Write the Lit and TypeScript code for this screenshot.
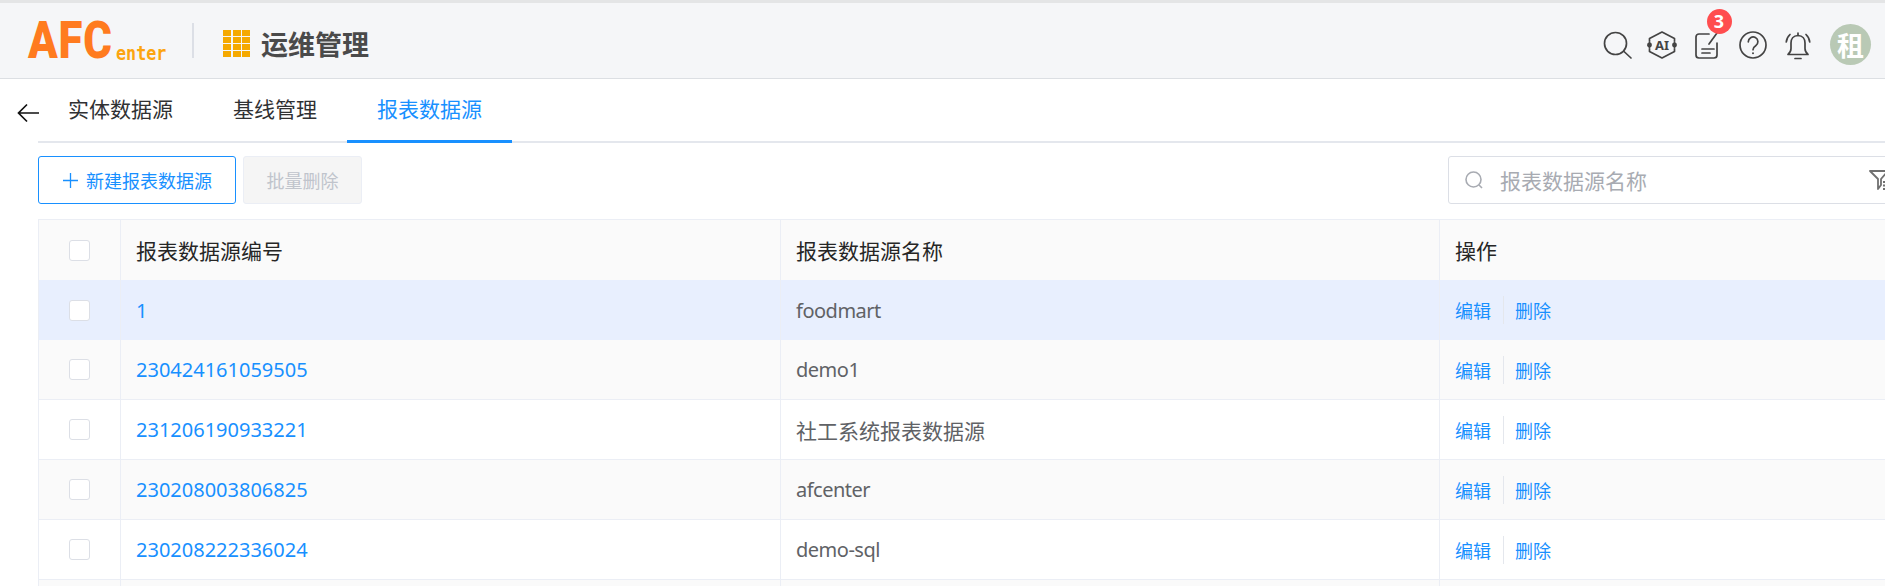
import { LitElement, html, css, svg } from "lit";
import { customElement } from "lit/decorators.js";

const rows = [
  { id: "1", name: "foodmart", cjk: false },
  { id: "230424161059505", name: "demo1", cjk: false },
  { id: "231206190933221", name: "社工系统报表数据源", cjk: true },
  { id: "230208003806825", name: "afcenter", cjk: false },
  { id: "230208222336024", name: "demo-sql", cjk: false },
  { id: "", name: "", cjk: false },
];

@customElement("app-root")
export class AppRoot extends LitElement {
  static styles = css`
    :host {
      display: block;
      width: 1885px;
      height: 586px;
      overflow: hidden;
      background: #fff;
      font-family: "Noto Sans", "Noto Sans CJK SC", sans-serif;
    }
    .top {
      height: 75px;
      border-top: 3px solid #e4e5e6;
      border-bottom: 1px solid #dcdfe3;
      background: #f5f6f8;
      display: flex;
      align-items: center;
    }
    .logo {
      width: 192px;
      height: 75px;
      flex: none;
      position: relative;
      overflow: hidden;
    }
    .afc {
      position: absolute;
      left: 28px;
      top: 2px;
      font: 900 52px/72px Roboto, sans-serif;
      color: #ff7b1f;
      transform: scaleX(0.84);
      transform-origin: left center;
      letter-spacing: 1px;
    }
    .enter {
      position: absolute;
      left: 116px;
      top: 38px;
      font: 700 19px/24px "DejaVu Sans Mono", monospace;
      color: #fca510;
      transform: scaleX(0.88);
      transform-origin: left center;
    }
    .divider {
      width: 2px;
      height: 35px;
      background: #dcdfe6;
      flex: none;
    }
    .app {
      display: flex;
      align-items: center;
      gap: 11px;
      margin-left: 29px;
      padding-top: 6px;
    }
    .grid {
      display: grid;
      grid-template-columns: repeat(3, 8px);
      grid-auto-rows: 5.5px;
      gap: 1.5px;
    }
    .grid i {
      background: #f5a900;
    }
    .title {
      font: 700 27px/36px "Noto Sans CJK SC", sans-serif;
      color: #4a4a4a;
    }
    .icons {
      margin-left: auto;
      display: flex;
      align-items: center;
      gap: 15.5px;
      padding: 9px 14px 0 0;
    }
    .ico {
      width: 30px;
      height: 30px;
      position: relative;
      flex: none;
    }
    .ico svg {
      display: block;
      overflow: visible;
    }
    .badge {
      position: absolute;
      left: 14.5px;
      top: -21.5px;
      width: 25px;
      height: 25px;
      border-radius: 50%;
      background: #ff4d4f;
      color: #fff;
      font: 700 18px/25px "Noto Sans", sans-serif;
      text-align: center;
    }
    .avatar {
      width: 41px;
      height: 41px;
      border-radius: 50%;
      background: #b9c9b5;
      color: #fff;
      font: 700 27px/41px "Noto Sans CJK SC", sans-serif;
      text-align: center;
      margin: -2px 0 0 1.5px;
      flex: none;
    }
    .nav {
      display: flex;
      height: 64px;
    }
    .back {
      width: 38px;
      flex: none;
      position: relative;
    }
    .back svg {
      position: absolute;
      left: 17px;
      top: 24px;
    }
    .tabs {
      flex: 1;
      display: flex;
      border-bottom: 2px solid #e4e7ed;
      height: 62px;
    }
    .tab {
      padding: 0 30px;
      font-size: 21px;
      line-height: 61px;
      color: #303133;
      height: 62px;
      box-sizing: border-box;
    }
    .tab.on {
      color: #1890ff;
      border-bottom: 3px solid #1890ff;
      height: 64px;
      margin-bottom: -2px;
    }
    .main {
      padding: 13px 0 0 38px;
      width: 1900px;
      box-sizing: border-box;
    }
    .bar {
      display: flex;
      align-items: center;
      gap: 7px;
      height: 48px;
    }
    .btn {
      height: 48px;
      box-sizing: border-box;
      border-radius: 3px;
      font-size: 18px;
      display: flex;
      align-items: center;
    }
    .btn.add {
      width: 198px;
      padding-left: 24px;
      gap: 8px;
      border: 1px solid #1890ff;
      color: #1890ff;
      background: #fff;
    }
    .btn.off {
      width: 119px;
      justify-content: center;
      border: 1px solid #ebeef5;
      background: #f5f5f5;
      color: #c0c4cc;
    }
    .search {
      margin-left: auto;
      width: 452px;
      height: 48px;
      box-sizing: border-box;
      border: 1px solid #dcdfe6;
      border-radius: 3px;
      display: flex;
      align-items: center;
      padding-left: 16px;
      gap: 17px;
      font-size: 21px;
      color: #a8abb2;
      position: relative;
    }
    .filter {
      position: absolute;
      left: 420px;
      top: 12px;
    }
    .table {
      margin-top: 15px;
      border-top: 1px solid #ebeef5;
      border-left: 1px solid #ebeef5;
    }
    .row {
      display: grid;
      grid-template-columns: 82px 660px 659px 1fr;
      height: 60px;
      box-sizing: border-box;
      border-bottom: 1px solid #ebeef5;
      background: #fff;
    }
    .row.head {
      background: #fafafa;
      height: 60px;
      border-bottom: 0;
      font-size: 21px;
      color: #262626;
    }
    .row.alt {
      background: #fafafa;
    }
    .row.sel {
      background: #e8effe;
      border-bottom: 0;
    }
    .cell {
      border-right: 1px solid #ebeef5;
      padding-left: 15px;
      display: flex;
      align-items: center;
      min-width: 0;
    }
    .cell.chk {
      padding: 0;
      justify-content: center;
    }
    .box {
      width: 21px;
      height: 21px;
      box-sizing: border-box;
      background: #fff;
      border: 1px solid #dcdfe6;
      border-radius: 3px;
    }
    .link {
      font-size: 20px;
      color: #1890ff;
    }
    .name {
      font-size: 20px;
      letter-spacing: -0.5px;
      color: #606266;
    }
    .name.cjk {
      font-size: 21px;
      letter-spacing: 0;
    }
    .ops {
      display: flex;
      align-items: center;
      font-size: 18px;
      color: #1890ff;
      padding-left: 15px;
    }
    .sep {
      width: 1px;
      height: 28px;
      background: #e4e7ed;
      margin: 0 11px 0 12px;
    }
  `;

  private icon(content: unknown) {
    return html`<svg width="30" height="30" viewBox="0 0 30 30" fill="none" stroke="#444" stroke-width="1.7" stroke-linecap="round" stroke-linejoin="round">${content}</svg>`;
  }

  render() {
    return html`
      <header class="top">
        <div class="logo">
          <span class="afc">AFC</span>
          <span class="enter">enter</span>
        </div>
        <div class="divider"></div>
        <div class="app">
          <div class="grid">${Array.from({ length: 12 }, () => html`<i></i>`)}</div>
          <div class="title">运维管理</div>
        </div>
        <div class="icons">
          <div class="ico">
            ${this.icon(svg`<circle cx="14.5" cy="13.5" r="11"/><path d="M23 21.500 30 28"/>`)}
          </div>
          <div class="ico">
            ${this.icon(svg`<path d="M2.500 11V8.500L15 2l12.500 6.500V11M27.500 19v2.500L15 28 2.500 21.500V19"/>
              <circle cx="2.500" cy="15" r="1.600" fill="#444"/><circle cx="27.500" cy="15" r="1.600" fill="#444"/>
              <path d="M2.500 12v6M27.500 12v6"/>
              <text x="15" y="19.500" text-anchor="middle" fill="#444" stroke="none" font-family="Noto Sans, sans-serif" font-weight="700" font-size="13">AI</text>`)}
          </div>
          <div class="ico">
            ${this.icon(svg`<path d="M17 4H7a3 3 0 0 0-3 3v18a3 3 0 0 0 3 3h15a3 3 0 0 0 3-3V13"/>
              <path d="M17 14 25 3"/><path d="M10 23h8M10 19h12" /> `)}
            <div class="badge">3</div>
          </div>
          <div class="ico">
            ${this.icon(svg`<circle cx="15" cy="15" r="13"/>
              <path d="M10.300 11.800a4.800 4.800 0 1 1 7.400 4c-1.700 1.100-2.700 1.900-2.700 3.900"/>
              <circle cx="15" cy="23.200" r="1" fill="#444" stroke="none"/>`)}
          </div>
          <div class="ico">
            ${this.icon(svg`<path d="M15 5.500c-4.800 0-7 3.600-7 7.500v5.500c0 3-1.800 5-3 6h20c-1.200-1-3-3-3-6V13c0-3.900-2.200-7.500-7-7.500Z"/>
              <path d="M15 5.500V3"/><path d="M12 28.500h6"/>
              <path d="M7 4.500C4.800 6.600 3.500 9 3.300 12M23 4.500c2.200 2.100 3.500 4.500 3.700 7.500"/>`)}
          </div>
          <div class="avatar">租</div>
        </div>
      </header>
      <nav class="nav">
        <div class="back">
          <svg width="22" height="20" viewBox="0 0 22 20" fill="none" stroke="#111" stroke-width="1.7">
            <path d="M22 10H1.500M10 1.500 1.500 10l8.500 8.500"/>
          </svg>
        </div>
        <div class="tabs">
          <div class="tab">实体数据源</div>
          <div class="tab">基线管理</div>
          <div class="tab on">报表数据源</div>
        </div>
      </nav>
      <main class="main">
        <div class="bar">
          <div class="btn add">
            <svg width="15" height="15" viewBox="0 0 15 15" stroke="#1890ff" stroke-width="1.3"><path d="M0 7.500h15M7.500 0v15"/></svg>
            <span>新建报表数据源</span>
          </div>
          <div class="btn off">批量删除</div>
          <div class="search">
            <svg width="18" height="18" viewBox="0 0 18 18" fill="none" stroke="#a8abb2" stroke-width="1.6">
              <circle cx="8.500" cy="8.500" r="7.500"/><path d="M14 14l3 3"/>
            </svg>
            <span>报表数据源名称</span>
            <svg class="filter" width="24" height="24" viewBox="0 0 24 24" fill="none" stroke="#707070" stroke-width="1.8" stroke-linejoin="round">
              <path d="M1 2h18l-7 8v6l-3 4v-10Z"/><path d="M14 13h8M14 16.500h8M14 20h8"/>
            </svg>
          </div>
        </div>
        <div class="table">
          <div class="row head">
            <div class="cell chk"><div class="box"></div></div>
            <div class="cell">报表数据源编号</div>
            <div class="cell">报表数据源名称</div>
            <div class="cell">操作</div>
          </div>
          ${rows.map(
            (r, i) => html`
              <div class="row ${i === 0 ? "sel" : i % 2 === 1 ? "alt" : ""}">
                <div class="cell chk">${r.id ? html`<div class="box"></div>` : ""}</div>
                <div class="cell"><span class="link">${r.id}</span></div>
                <div class="cell"><span class="name ${r.cjk ? "cjk" : ""}">${r.name}</span></div>
                <div class="cell ops">
                  ${r.id ? html`<span>编辑</span><span class="sep"></span><span>删除</span>` : ""}
                </div>
              </div>
            `
          )}
        </div>
      </main>
    `;
  }
}
